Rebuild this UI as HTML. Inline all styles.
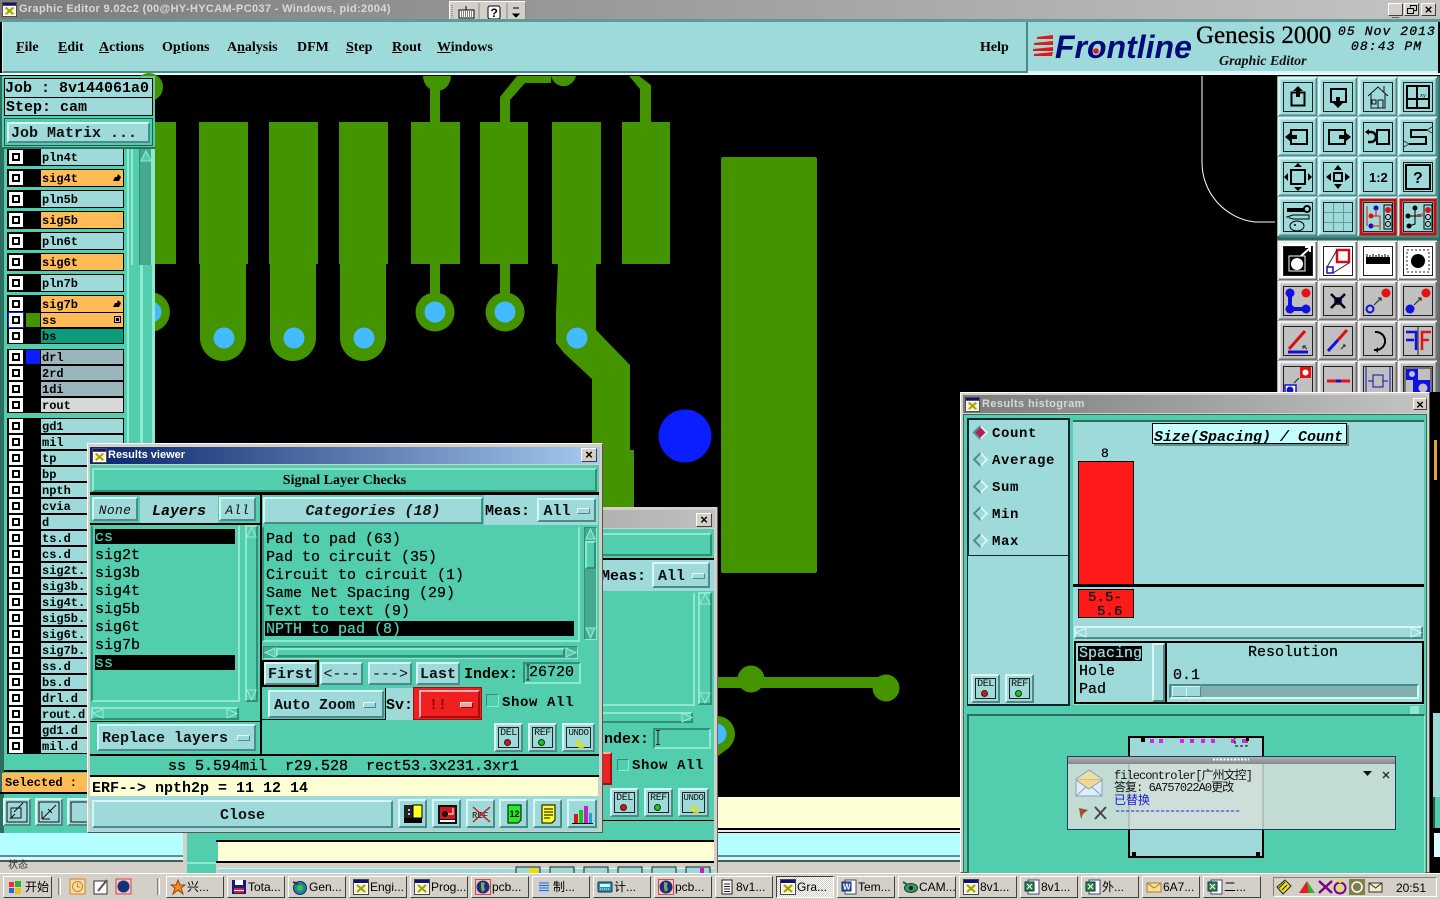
<!DOCTYPE html>
<html><head><meta charset="utf-8"><title>Graphic Editor</title>
<style>
*{box-sizing:border-box;margin:0;padding:0}
html,body{width:1440px;height:900px;overflow:hidden;background:#000}
div{position:absolute}
svg{position:absolute;display:block}
.m,.s,.bn,.ibt{font-family:"Liberation Mono","Noto Sans CJK SC",monospace}
.s{position:absolute;white-space:pre;font-size:15px;line-height:18px;color:#000;font-family:"Liberation Mono",monospace;-webkit-text-stroke:.25px currentColor}
.sb{font-weight:bold;-webkit-text-stroke:0}
.mn{position:absolute;font:bold 14px/18px "Liberation Serif",serif;top:39px;color:#000}
.b{background:#9fdada;border:2px solid;border-color:#d6f6f6 #4d8a8a #4d8a8a #d6f6f6}
.bn{position:absolute;background:#9fdada;border:2px solid;border-color:#d6f6f6 #4d8a8a #4d8a8a #d6f6f6;font-size:15px;font-weight:bold;text-align:center;white-space:pre;color:#111}
.tl{background:#52cdae;border:2px solid;border-color:#8fe8d0 #2f8f78 #2f8f78 #8fe8d0}
.sunk{background:#52cdae;border:2px solid;border-color:#2f8f78 #8fe8d0 #8fe8d0 #2f8f78}
.ln{background:#000}
.r{left:7px;width:117px;height:16px;background:#000}
.r i{position:absolute;left:2px;top:1px;width:14px;height:14px;background:#fff}
.r i:after{content:"";position:absolute;left:3px;top:3px;width:4px;height:4px;border:2px solid #000;background:#fff;box-sizing:content-box}
.r b{position:absolute;left:34px;top:1px;width:82px;height:14px;background:#9fdada;font:bold 12px/17px "Liberation Mono",monospace;color:#000;padding-left:1px;white-space:pre;overflow:hidden}
.r u{position:absolute;left:19px;top:1px;width:14px;height:14px}
.r2{height:18px}
.r2 b{height:16px;line-height:19px}
.r2 i{top:2px}
.r2 u{top:2px}
.o b{background:#ffbb55}
.g b{background:#9ab5bb}
.cl{background:#d4d0c8;border:1px solid;border-color:#fff #404040 #404040 #fff;font:bold 13px/12px "Liberation Sans",sans-serif;text-align:center;color:#000}
.tt{position:absolute;white-space:pre;font:bold 11px/16px "Liberation Sans",sans-serif}
.t{top:876px;height:22px;width:58px;background:#d4d0c8;border:1px solid;border-color:#fff #404040 #404040 #fff;font:12px/21px "Liberation Sans","Noto Sans CJK SC",sans-serif;color:#000;white-space:pre;padding-left:20px}
.t svg{left:3px;top:2px}
.ib{background:#9fdada;border:2px solid;border-color:#d6f6f6 #4d8a8a #4d8a8a #d6f6f6;width:29px;height:29px}
.ib em{position:absolute;left:2px;top:2px;width:21px;height:21px;border:1px solid #222;font:normal 10px/11px "Liberation Mono",monospace;text-align:center;color:#111;letter-spacing:-.4px}
.ib s{position:absolute;left:8px;top:14px;width:7px;height:7px;border-radius:50%;border:1px solid #222;text-decoration:none}
.rad{width:11px;height:11px;transform:rotate(45deg);border:2px solid;border-color:#d6f6f6 #d6f6f6 #4d8a8a #4d8a8a;background:#9fdada}
.hand{left:auto;right:2px;top:4px}
</style></head><body>

<svg width="0" height="0" style="position:absolute"><defs>
<symbol id="xw" viewBox="0 0 16 16"><rect x=".5" y=".5" width="15" height="15" fill="#fff" stroke="#444"/><rect x="1" y="1" width="14" height="3" fill="#11116e"/><rect x="2" y="5" width="12" height="9" fill="#f4f4c8"/><path d="M4 6l8 7M12 6l-8 7" stroke="#a0a000" stroke-width="2"/></symbol>
<symbol id="xl" viewBox="0 0 16 16"><rect x="4" y="1" width="11" height="14" fill="#fff" stroke="#446"/><rect x="1" y="3" width="9" height="9" fill="#2a8a3a" stroke="#135"/><path d="M3 5l5 5M8 5l-5 5" stroke="#fff"/></symbol>
<symbol id="gl" viewBox="0 0 16 16"><rect x=".5" y=".5" width="15" height="15" fill="#e8c8c8" stroke="#d44"/><circle cx="8" cy="8" r="6.5" fill="#16307a"/><path d="M6 3l4 1-1 3 1 4-3 2-1-4z" fill="#8aa060"/></symbol>
</defs></svg>

<!-- top title bar -->
<div style="left:0;top:0;width:1440px;height:20px;background:linear-gradient(90deg,#7c7c7c,#c4c4c4)"></div>
<svg style="left:2px;top:2px" width="15" height="15"><use href="#xw" width="15" height="15"/></svg>
<div class="tt" style="left:19px;top:1px;color:#d8d8d8;letter-spacing:.34px">Graphic Editor 9.02c2 (00@HY-HYCAM-PC037 - Windows, pid:2004)</div>
<div style="left:449px;top:1px;width:77px;height:22px;background:#d4d0c8;border:1px solid;border-color:#fff #888 #888 #fff"></div>
<svg style="left:449px;top:1px" width="77" height="22"><path d="M3 4v14" stroke="#999" stroke-dasharray="1 1" stroke-width="2"/><rect x="10" y="9" width="15" height="8" fill="#fff" stroke="#000"/><path d="M12 11h11M12 13h11M12 15h11" stroke="#000" stroke-dasharray="1 1"/><path d="M17 9V5" stroke="#000"/><path d="M30 2v18M58 2v18" stroke="#888"/><rect x="39" y="5" width="12" height="13" rx="2" fill="#fff" stroke="#000"/><text x="41.500" y="16" font-family="Liberation Sans" font-weight="bold" font-size="12">?</text><path d="M64 7h6M64 13h6l-3 3z" stroke="#000" fill="#000"/></svg>
<div class="cl" style="left:1388px;top:3px;width:15px;height:13px;line-height:15px">_</div>
<div class="cl" style="left:1404px;top:3px;width:15px;height:13px"><svg style="left:2px;top:1px" width="10" height="9"><path d="M3.500 2.500V.5h6v5H7M.5 3.500h6v5h-6z" fill="none" stroke="#000"/></svg></div>
<div class="cl" style="left:1421px;top:3px;width:15px;height:13px">×</div>

<!-- menu bar -->
<div style="left:0;top:19px;width:1440px;height:3px;background:#5f9a9a"></div>
<div style="left:0;top:22px;width:1440px;height:54px;background:#000"></div>
<div style="left:2px;top:22px;width:1024px;height:51px;background:#9fdada;border-left:1px solid #d6f6f6;border-bottom:2px solid #4d8a8a"></div>
<div style="left:1026px;top:22px;width:2px;height:51px;background:#4d8a8a"></div>
<div style="left:0;top:73px;width:1440px;height:2px;background:#e8fafa"></div>
<span class="mn" style="left:16px"><u>F</u>ile</span>
<span class="mn" style="left:58px"><u>E</u>dit</span>
<span class="mn" style="left:99px"><u>A</u>ctions</span>
<span class="mn" style="left:162px">O<u>p</u>tions</span>
<span class="mn" style="left:227px">A<u>n</u>alysis</span>
<span class="mn" style="left:297px">DFM</span>
<span class="mn" style="left:346px"><u>S</u>tep</span>
<span class="mn" style="left:392px"><u>R</u>out</span>
<span class="mn" style="left:437px"><u>W</u>indows</span>
<span class="mn" style="left:980px">Help</span>

<!-- logo panel -->
<div style="left:1028px;top:22px;width:410px;height:51px;background:#9fdada;border-bottom:2px solid #d6f6f6"></div>
<svg style="left:1033px;top:34px" width="22" height="26"><path d="M20 1L4 3v2l16 0zM20 7L1 9v2l19 0zM20 13L0 15v2l20 0zM20 18L1 20v2l18 0z" fill="#e01818"/></svg>
<span class="s" style="left:1055px;top:28px;font:italic bold 32px/38px 'Liberation Sans',sans-serif;color:#000a78;-webkit-text-stroke:0">Frontline</span>
<svg style="left:1091px;top:46px" width="10" height="10"><circle cx="5" cy="5" r="2.800" fill="#e01818"/></svg>
<span class="s" style="left:1196px;top:21px;font:25px/30px 'Liberation Serif',serif;-webkit-text-stroke:.3px #000">Genesis 2000</span>
<span class="s" style="left:1219px;top:53px;font:italic bold 14px/17px 'Liberation Serif',serif;color:#111;-webkit-text-stroke:0">Graphic Editor</span>
<span class="s sb" style="left:1338px;top:23px;font-style:italic;font-size:13px;letter-spacing:1.100px;font-weight:normal;-webkit-text-stroke:.3px #000">05 Nov 2013</span>
<span class="s sb" style="left:1351px;top:38px;font-style:italic;font-size:13px;letter-spacing:1.100px;font-weight:normal;-webkit-text-stroke:.3px #000">08:43 PM</span>

<!-- PCB canvas -->
<svg style="left:0;top:0" width="1440" height="900" viewBox="0 0 1440 900">
<rect x="0" y="76" width="1277" height="760" fill="#000"/>
<g fill="#449400">
<rect x="150" y="122" width="26" height="142"/>
<rect x="199" y="122" width="49" height="142"/><path d="M200 264h46v74a23 23 0 0 1-46 0z"/>
<rect x="269" y="122" width="49" height="142"/><path d="M270 264h46v74a23 23 0 0 1-46 0z"/>
<rect x="339" y="122" width="49" height="142"/><path d="M340 264h46v74a23 23 0 0 1-46 0z"/>
<rect x="411" y="122" width="49" height="142"/>
<rect x="480" y="122" width="48" height="142"/>
<rect x="552" y="122" width="49" height="142"/>
<rect x="622" y="122" width="48" height="142"/>
<rect x="430" y="264" width="10" height="34"/><circle cx="435" cy="312" r="19.500"/>
<rect x="500" y="264" width="10" height="34"/><circle cx="505" cy="312" r="19.500"/>
<circle cx="150" cy="312" r="20"/><circle cx="149" cy="87" r="14"/>
<path d="M558 264h38v66l34 35v85l4 0v60h-42v-131l-28-26-8-10v-30z"/><circle cx="577" cy="338" r="19"/>
<path d="M423 76a14 15 0 0 0 28 0z"/><rect x="430" y="85" width="10" height="37"/>
<path d="M500 122V97l17-21h34v7h-26l-15 17v22z"/><path d="M551 76a13 14 0 0 0 25 0z"/>
<path d="M629 76h10l12 9v37h-11V89z"/>
<rect x="721" y="157" width="96" height="416" rx="2"/>
<rect x="700" y="677" width="186" height="11"/><circle cx="751" cy="679" r="13.500"/><circle cx="886" cy="688" r="13.500"/>
<circle cx="717" cy="734" r="18"/><path d="M700 740l18 16 12-9z" />
</g>
<g fill="#44bbff">
<circle cx="224" cy="338" r="10.500"/><circle cx="294" cy="338" r="10.500"/><circle cx="364" cy="338" r="10.500"/>
<circle cx="435" cy="312" r="10.500"/><circle cx="505" cy="312" r="10.500"/><circle cx="577" cy="338" r="10.500"/>
<circle cx="151" cy="312" r="10.500"/><circle cx="716" cy="734" r="10.500"/>
</g>
<circle cx="685" cy="436" r="26.500" fill="#0a1eff"/>
<path d="M1202 76V163A60 60 0 0 0 1255 222H1275" fill="none" stroke="#fff" stroke-width="1"/>
</svg>

<!-- bottom band -->
<div style="left:716px;top:797px;width:244px;height:31px;background:#ffffd6"></div>
<div style="left:0;top:828px;width:960px;height:5px;background:#000"></div>
<div style="left:0;top:830px;width:960px;height:2px;background:#eee"></div>
<div style="left:0;top:833px;width:960px;height:22px;background:#b4ffff"></div>
<div style="left:0;top:855px;width:960px;height:2px;background:#6a8a8a"></div>
<div style="left:0;top:857px;width:960px;height:3px;background:#c8ffff"></div>
<div style="left:0;top:860px;width:960px;height:2px;background:#555"></div>
<div style="left:0;top:862px;width:960px;height:11px;background:#d4d0c8"></div>
<span class="s" style="left:8px;top:858px;font:10px/12px 'Noto Sans CJK SC',sans-serif;color:#333;-webkit-text-stroke:0">状态</span>

<!-- left panel -->
<div style="left:0;top:76px;width:155px;height:757px;background:#52cdae;border-left:4px solid #2e6e5e"></div>
<div style="left:127px;top:148px;width:2px;height:685px;background:#8fe8d0"></div>
<div style="left:131px;top:148px;width:2px;height:117px;background:#8fe8d0"></div>
<div style="left:139px;top:148px;width:13px;height:117px;background:#46a88f;border-left:1px solid #2f8f78;border-right:1px solid #8fe8d0"></div>
<div style="left:140px;top:265px;width:3px;height:568px;background:#8fe8d0"></div>
<div style="left:152px;top:148px;width:3px;height:685px;background:#8fe8d0"></div>
<svg style="left:140px;top:150px" width="12" height="12"><polygon points="6,1 11,11 1,11" fill="#52cdae" stroke="#9fe8d8"/></svg>

<div class="r r2" style="top:148px"><i></i><u></u><b>pln4t</b></div>
<div class="r r2 o" style="top:169px"><i></i><u></u><b>sig4t<svg class="hand" width="8" height="8"><path d="M0 7l2-4 2 0 1-3 1 1 2 2-2 4z"/></svg></b></div>
<div class="r r2" style="top:190px"><i></i><u></u><b>pln5b</b></div>
<div class="r r2 o" style="top:211px"><i></i><u></u><b>sig5b</b></div>
<div class="r r2" style="top:232px"><i></i><u></u><b>pln6t</b></div>
<div class="r r2 o" style="top:253px"><i></i><u></u><b>sig6t</b></div>
<div class="r r2" style="top:274px"><i></i><u></u><b>pln7b</b></div>
<div class="r r2 o" style="top:295px"><i></i><u></u><b>sig7b<svg class="hand" width="8" height="8"><path d="M0 7l2-4 2 0 1-3 1 1 2 2-2 4z"/></svg></b></div>
<div class="r o" style="top:312px"><i style="box-shadow:0 0 0 1px #0a1eff"></i><u style="background:#449400"></u><b>ss<svg class="hand" style="top:3px" width="7" height="7"><rect x=".5" y=".5" width="6" height="6" fill="none" stroke="#000"/><rect x="2" y="2" width="3" height="3"/></svg></b></div>
<div class="r" style="top:328px"><i></i><u></u><b style="background:#0c9c7c">bs</b></div>
<div class="r g" style="top:349px"><i></i><u style="background:#0a1eff"></u><b>drl</b></div>
<div class="r g" style="top:365px"><i></i><u></u><b>2rd</b></div>
<div class="r g" style="top:381px"><i></i><u></u><b>1di</b></div>
<div class="r" style="top:397px"><i></i><u></u><b style="background:#d8d8d8">rout</b></div>
<div class="r" style="top:418px"><i></i><u></u><b>gd1</b></div>
<div class="r" style="top:434px"><i></i><u></u><b>mil</b></div>
<div class="r" style="top:450px"><i></i><u></u><b>tp</b></div>
<div class="r" style="top:466px"><i></i><u></u><b>bp</b></div>
<div class="r" style="top:482px"><i></i><u></u><b>npth</b></div>
<div class="r" style="top:498px"><i></i><u></u><b>cvia</b></div>
<div class="r" style="top:514px"><i></i><u></u><b>d</b></div>
<div class="r" style="top:530px"><i></i><u></u><b>ts.d</b></div>
<div class="r" style="top:546px"><i></i><u></u><b>cs.d</b></div>
<div class="r" style="top:562px"><i></i><u></u><b>sig2t.</b></div>
<div class="r" style="top:578px"><i></i><u></u><b>sig3b.</b></div>
<div class="r" style="top:594px"><i></i><u></u><b>sig4t.</b></div>
<div class="r" style="top:610px"><i></i><u></u><b>sig5b.</b></div>
<div class="r" style="top:626px"><i></i><u></u><b>sig6t.</b></div>
<div class="r" style="top:642px"><i></i><u></u><b>sig7b.</b></div>
<div class="r" style="top:658px"><i></i><u></u><b>ss.d</b></div>
<div class="r" style="top:674px"><i></i><u></u><b>bs.d</b></div>
<div class="r" style="top:690px"><i></i><u></u><b>drl.d</b></div>
<div class="r" style="top:706px"><i></i><u></u><b>rout.d</b></div>
<div class="r" style="top:722px"><i></i><u></u><b>gd1.d</b></div>
<div class="r" style="top:738px"><i></i><u></u><b>mil.d</b></div>

<!-- job box -->
<div style="left:2px;top:76px;width:153px;height:73px;background:#52cdae;border-bottom:2px solid #2e6e5e"></div>
<div style="left:4px;top:78px;width:149px;height:20px;background:#9fdada;border:1px solid #000"></div>
<span class="s sb" style="left:5px;top:80px">Job : 8v144061a0</span>
<div style="left:4px;top:97px;width:149px;height:19px;background:#9fdada;border:1px solid #000"></div>
<span class="s sb" style="left:6px;top:99px">Step: cam</span>
<div style="left:4px;top:118px;width:149px;height:28px;background:#52cdae;border:1px solid #1e5e4e"></div>
<div class="bn" style="left:7px;top:122px;width:143px;height:21px;text-align:left;padding-left:2px;line-height:20px">Job Matrix ...</div>

<!-- selected -->
<div style="left:0;top:756px;width:88px;height:77px;background:#52cdae;border-left:4px solid #2e6e5e"></div>
<div style="left:4px;top:770px;width:84px;height:2px;background:#000"></div>
<div style="left:2px;top:773px;width:86px;height:19px;background:#ffbb55"></div>
<span class="s sb" style="left:5px;top:774px;font-size:12px">Selected :</span>
<div style="left:0;top:792px;width:88px;height:2px;background:#000"></div>
<div class="bn" style="left:3px;top:798px;width:28px;height:28px"><svg width="24" height="24"><rect x="2" y="2" width="20" height="20" fill="none" stroke="#111"/><rect x="6" y="8" width="10" height="10" fill="none" stroke="#111"/><path d="M9 12l9-9M5 19l5-5" stroke="#111"/></svg></div>
<div class="bn" style="left:35px;top:798px;width:28px;height:28px"><svg width="24" height="24"><rect x="2" y="2" width="20" height="20" fill="none" stroke="#111"/><path d="M5 19L19 5M5 19h8M5 19v-8M11 9l4 4" stroke="#111"/></svg></div>
<div class="bn" style="left:67px;top:798px;width:28px;height:28px"><svg width="24" height="24"><rect x="2" y="2" width="20" height="20" fill="none" stroke="#111"/></svg></div>
<div style="left:88px;top:796px;width:2px;height:37px;background:#000"></div>

<!-- right toolbar -->
<svg style="left:1277px;top:76px" width="163" height="316" viewBox="1277 76 163 316">
<defs>
<g id="btT"><rect width="38" height="38" fill="#9fdada"/><path d="M0 38V0H38" fill="none" stroke="#d6f6f6" stroke-width="3"/><path d="M0 38H38V0" fill="none" stroke="#4d8a8a" stroke-width="3"/><rect x="4.500" y="4.500" width="29" height="29" fill="none" stroke="#222"/></g>
<g id="btG"><rect width="38" height="38" fill="#c0c0c0"/><path d="M0 38V0H38" fill="none" stroke="#efefef" stroke-width="3"/><path d="M0 38H38V0" fill="none" stroke="#707070" stroke-width="3"/><rect x="4.500" y="4.500" width="29" height="29" fill="none" stroke="#222"/></g>
<g id="btW"><rect width="38" height="38" fill="#fff"/><path d="M0 38V0H38" fill="none" stroke="#efefef" stroke-width="3"/><path d="M0 38H38V0" fill="none" stroke="#707070" stroke-width="3"/><rect x="4.500" y="4.500" width="29" height="29" fill="none" stroke="#222"/></g>
</defs>
<rect x="1277" y="76" width="163" height="161" fill="#2e6e5e"/>
<rect x="1277" y="237" width="163" height="4" fill="#2e6e5e"/>
<rect x="1277" y="241" width="163" height="151" fill="#5a6a6a"/>
<!-- row1 -->
<g transform="translate(1279 78)"><use href="#btT"/><path d="M12.500 14.500h13v13h-13z" fill="none" stroke="#000" stroke-width="2"/><path d="M19 8l-5 5h3v6h4v-6h3z" fill="#000"/></g>
<g transform="translate(1319 78)"><use href="#btT"/><path d="M12 11h15v13H12z" fill="none" stroke="#000" stroke-width="2"/><path d="M19 30l-5-5h3v-6h4v6h3z" fill="#000"/></g>
<g transform="translate(1359 78)"><use href="#btT"/><path d="M9 18l10-9 10 9M12 16v14h14V16M19 30v-8h5v8M13 22h4v4h-4zM25 8v7" fill="none" stroke="#111"/></g>
<g transform="translate(1399 78)"><use href="#btT"/><rect x="8" y="8" width="22" height="22" fill="none" stroke="#000" stroke-width="2"/><path d="M18 8v22M8 21h22" stroke="#000" stroke-width="2"/><text x="21" y="19" font-size="5" font-family="Liberation Mono">xy</text></g>
<!-- row2 -->
<g transform="translate(1279 118)"><use href="#btT"/><rect x="12" y="12" width="16" height="14" fill="none" stroke="#000" stroke-width="2"/><path d="M6 19l6-5v3h6v4h-6v3z" fill="#000"/></g>
<g transform="translate(1319 118)"><use href="#btT"/><rect x="10" y="12" width="16" height="14" fill="none" stroke="#000" stroke-width="2"/><path d="M32 19l-6-5v3h-6v4h6v3z" fill="#000"/></g>
<g transform="translate(1359 118)"><use href="#btT"/><rect x="18" y="12" width="12" height="14" fill="none" stroke="#000" stroke-width="2"/><path d="M8 14h4a4 4 0 0 1 0 10H9" fill="none" stroke="#000" stroke-width="2.500"/><path d="M6 14l4-3v6z" fill="#000"/></g>
<g transform="translate(1399 118)"><use href="#btT"/><path d="M28 12H12v7h15v7H10" fill="none" stroke="#000" stroke-width="2"/><path d="M28 12l5-3M28 12l5 3M10 26l-5-3M10 26l-5 3" stroke="#333" fill="none"/></g>
<!-- row3 -->
<g transform="translate(1279 158)"><use href="#btT"/><rect x="12" y="12" width="14" height="14" fill="none" stroke="#000" stroke-width="2"/><path d="M19 5l-4 4h8zM19 33l-4-4h8zM5 19l4-4v8zM33 19l-4-4v8z" fill="#000"/></g>
<g transform="translate(1319 158)"><use href="#btT"/><rect x="15" y="15" width="8" height="8" fill="none" stroke="#000" stroke-width="2"/><path d="M19 7l-4 5h8zM19 31l-4-5h8zM7 19l5-4v8zM31 19l-5-4v8z" fill="#000"/></g>
<g transform="translate(1359 158)"><use href="#btT"/><text x="10" y="24" font-family="Liberation Sans" font-weight="bold" font-size="13">1:2</text></g>
<g transform="translate(1399 158)"><use href="#btT"/><rect x="7" y="7" width="24" height="24" fill="none" stroke="#000" stroke-width="2"/><text x="14" y="25" font-family="Liberation Sans" font-weight="bold" font-size="16">?</text></g>
<!-- row4 -->
<g transform="translate(1279 198)"><use href="#btT"/><path d="M8 11h18M8 13h18" stroke="#000" stroke-width="2"/><circle cx="28" cy="11" r="3" fill="none" stroke="#000" stroke-width="2"/><path d="M8 19l6-2h16v4H14z" fill="none" stroke="#000"/><ellipse cx="18" cy="28" rx="7" ry="5" fill="none" stroke="#000"/><circle cx="16" cy="27" r="1" fill="#000"/></g>
<g transform="translate(1319 198)"><use href="#btT"/><path d="M14.500 5v28M24.500 5v28M5 14.500h28M5 24.500h28" stroke="#6a9a9a"/></g>
<g transform="translate(1359 198)"><use href="#btT"/><rect x="2" y="2" width="34" height="34" fill="none" stroke="#c01010" stroke-width="3"/><rect x="25" y="7" width="8" height="24" fill="none" stroke="#000"/><circle cx="29" cy="12" r="3" fill="#e01010"/><circle cx="29" cy="19" r="2.500" fill="none" stroke="#000"/><circle cx="29" cy="26" r="2.500" fill="none" stroke="#000"/><circle cx="12" cy="18" r="2.500" fill="#e01010"/><circle cx="17" cy="10" r="2.500" fill="#10c"/><circle cx="12" cy="28" r="2.500" fill="#10c"/><path d="M12 18h9v14M17 10v8M12 28h8M8 8v20" stroke="#e01010" fill="none"/></g>
<g transform="translate(1399 198)"><use href="#btT"/><rect x="2" y="2" width="34" height="34" fill="none" stroke="#c01010" stroke-width="3"/><rect x="25" y="7" width="8" height="24" fill="none" stroke="#000"/><circle cx="29" cy="12" r="3" fill="#e01010"/><circle cx="29" cy="19" r="2.500" fill="none" stroke="#000"/><circle cx="29" cy="26" r="2.500" fill="none" stroke="#000"/><circle cx="9" cy="18" r="2.500" fill="#000"/><circle cx="16" cy="10" r="2.500" fill="#000"/><circle cx="10" cy="28" r="2.500" fill="#000"/><path d="M16 10v16l-6 2M11 18h10M19 16v3M21 16v3" stroke="#000" fill="none"/><path d="M18 18h5v-3" stroke="#e01010" fill="none"/></g>
<!-- section 2 row1 -->
<g transform="translate(1279 242)"><use href="#btW"/><rect x="5" y="5" width="28" height="28" fill="#000"/><rect x="10" y="14" width="16" height="15" fill="none" stroke="#fff"/><circle cx="18" cy="22" r="6" fill="#fff"/><path d="M22 14l9-8M26 5h5v5" stroke="#fff" fill="none" stroke-width="2"/></g>
<g transform="translate(1319 242)"><use href="#btW"/><rect x="18" y="8" width="12" height="12" fill="#fff" stroke="#d01010" stroke-width="2.500"/><rect x="8" y="25" width="6" height="6" fill="#fff" stroke="#1010d0" stroke-width="1.500"/><path d="M8 25L18 8M14 31l16-10" stroke="#222"/></g>
<g transform="translate(1359 242)"><use href="#btW"/><rect x="7" y="15" width="24" height="7" fill="#000"/><path d="M8 15v-3M11 15v-2M14 15v-3M17 15v-2M20 15v-3M23 15v-2M26 15v-3M29 15v-2" stroke="#000"/></g>
<g transform="translate(1399 242)"><use href="#btW"/><rect x="8" y="8" width="22" height="22" fill="none" stroke="#222" stroke-dasharray="2 2"/><circle cx="19" cy="19" r="7" fill="#000"/></g>
<!-- row2 -->
<g transform="translate(1279 282)"><use href="#btG"/><path d="M11 11v16h16" fill="none" stroke="#1010e0" stroke-width="4"/><circle cx="11" cy="11" r="4.500" fill="#1010e0"/><circle cx="11" cy="27" r="4.500" fill="#1010e0"/><circle cx="27" cy="27" r="4.500" fill="#1010e0"/><circle cx="27" cy="11" r="4.500" fill="#e81010"/></g>
<g transform="translate(1319 282)"><use href="#btG"/><circle cx="19" cy="19" r="4" fill="#1010a0"/><path d="M12 12l14 14M26 12L12 26" stroke="#000" stroke-width="2.500"/></g>
<g transform="translate(1359 282)"><use href="#btG"/><circle cx="27" cy="11" r="4.500" fill="#e81010"/><circle cx="11" cy="27" r="3.500" fill="none" stroke="#1010e0" stroke-width="2"/><path d="M15 23l7-7M19 16h3v3" stroke="#222" fill="none"/></g>
<g transform="translate(1399 282)"><use href="#btG"/><circle cx="27" cy="11" r="4.500" fill="#e81010"/><circle cx="11" cy="27" r="4.500" fill="#1010e0"/><path d="M15 23l7-7M19 16h3v3" stroke="#222" fill="none"/></g>
<!-- row3 -->
<g transform="translate(1279 322)"><use href="#btG"/><path d="M10 27L26 9" stroke="#d81010" stroke-width="3"/><path d="M9 30h20" stroke="#1010e0" stroke-width="3"/><path d="M24 24l4 3M24 24v3M24 24h3" stroke="#222" fill="none"/></g>
<g transform="translate(1319 322)"><use href="#btG"/><path d="M9 29L19 18" stroke="#1010e0" stroke-width="3"/><path d="M19 18L28 8" stroke="#d81010" stroke-width="3"/><path d="M22 27l4-4M24 23h2v2" stroke="#222" fill="none"/></g>
<g transform="translate(1359 322)"><use href="#btG"/><path d="M16 10a8 8 0 0 1 2 18h-3" fill="none" stroke="#000" stroke-width="2"/><path d="M16 28l3-3v6z" fill="#000"/></g>
<g transform="translate(1399 322)"><use href="#btG"/><path d="M7 10h10v18M7 18h8" fill="none" stroke="#1010e0" stroke-width="2.500"/><path d="M19 5v28" stroke="#222"/><path d="M32 10H23v18M23 18h7" fill="none" stroke="#e81010" stroke-width="2.500"/></g>
<!-- row4 -->
<g transform="translate(1279 362)"><use href="#btG"/><rect x="21" y="5" width="11" height="11" fill="#e81010"/><circle cx="26.500" cy="10.500" r="3" fill="#fff"/><rect x="6" y="23" width="11" height="11" fill="#fff" stroke="#1010e0" stroke-width="1.500"/><circle cx="11" cy="28" r="3.500" fill="#1010e0"/><path d="M15 21l5-5" stroke="#222"/></g>
<g transform="translate(1319 362)"><use href="#btG"/><path d="M8 19h9" stroke="#e81010" stroke-width="3"/><path d="M17 19h5" stroke="#1010e0" stroke-width="3"/><path d="M22 19h9" stroke="#e81010" stroke-width="3"/></g>
<g transform="translate(1359 362)"><use href="#btG"/><path d="M7 5v28M31 5v28M9 19h20" stroke="#1010a0" fill="none"/><rect x="14" y="13" width="10" height="12" fill="#c0c0c0" stroke="#1010a0"/></g>
<g transform="translate(1399 362)"><use href="#btG"/><rect x="6" y="6" width="26" height="26" fill="#c0c0c0" stroke="#222"/><path d="M7 7h12v11h12v14H14V18H7z" fill="#1010e0"/><circle cx="13" cy="12" r="3" fill="#c0c0c0"/><circle cx="24" cy="26" r="4.500" fill="#c0c0c0"/></g>
</svg>

<!-- second window -->
<div style="left:183px;top:507px;width:535px;height:366px;background:#d4d0c8;border-right:1px solid #666"></div>
<div style="left:187px;top:510px;width:528px;height:18px;background:linear-gradient(90deg,#7c7c7c,#c0c0c0)"></div>
<div class="cl" style="left:696px;top:513px;width:16px;height:14px">×</div>
<div style="left:187px;top:529px;width:527px;height:334px;background:#52cdae"></div>
<div style="left:187px;top:863px;width:29px;height:10px;background:#52cdae"></div>
<div class="tl" style="left:190px;top:533px;width:522px;height:23px"></div>
<div class="ln" style="left:187px;top:558px;width:527px;height:2px"></div>
<div style="left:187px;top:560px;width:527px;height:31px;background:#9fdada"></div>
<span class="s sb" style="left:601px;top:568px">Meas:</span>
<div class="bn" style="left:652px;top:562px;width:58px;height:26px;line-height:25px;padding-right:19px">All</div>
<div style="left:692px;top:573px;width:13px;height:6px;background:#9fdada;border:1px solid;border-color:#e8fafa #4d8a8a #4d8a8a #e8fafa"></div>
<div class="sunk" style="left:200px;top:592px;width:495px;height:114px;border-color:#52cdae #8fe8d0 #8fe8d0 #2f8f78"></div>
<div class="tl" style="left:698px;top:592px;width:14px;height:113px"></div>
<svg style="left:699px;top:593px" width="12" height="12"><polygon points="6,1 11,11 1,11" fill="#52cdae" stroke="#9fe8d8"/></svg>
<svg style="left:699px;top:692px" width="12" height="12"><polygon points="6,11 11,1 1,1" fill="#52cdae" stroke="#9fe8d8"/></svg>
<div class="tl" style="left:200px;top:712px;width:493px;height:11px"></div>
<svg style="left:681px;top:712px" width="12" height="11"><polygon points="11,5.500 1,1 1,10" fill="#52cdae" stroke="#9fe8d8"/></svg>
<span class="s sb" style="left:595px;top:731px">Index:</span>
<div class="sunk" style="left:653px;top:728px;width:58px;height:21px"></div>
<svg style="left:655px;top:730px" width="6" height="16"><path d="M1 .5h4M3 .5v14M1 14.500h4" stroke="#222" fill="none"/></svg>
<div style="left:590px;top:752px;width:22px;height:33px;background:#f02020;border:2px solid;border-color:#ffb0b0 #a01010 #a01010 #ffb0b0"></div>
<div class="sunk" style="left:617px;top:759px;width:12px;height:12px;border-width:1px"></div>
<span class="s sb" style="left:632px;top:757px;font-size:14px;letter-spacing:.6px">Show All</span>
<div class="ib" style="left:610px;top:788px"><em>DEL</em><s style="background:#e01010"></s></div>
<div class="ib" style="left:644px;top:788px"><em>REF</em><s style="background:#10d010"></s></div>
<div class="ib" style="left:678px;top:788px;width:31px"><em style="width:23px;font-size:9px">UNDO</em><svg style="left:9px;top:13px" width="11" height="11"><path d="M2 5h5a2.500 2.500 0 0 1 0 5H4M2 5l3-3M2 5l3 3" fill="none" stroke="#e8e000" stroke-width="1.600"/></svg></div>
<div class="ln" style="left:187px;top:820px;width:527px;height:1px"></div>
<div class="ln" style="left:216px;top:840px;width:498px;height:2px"></div>
<div style="left:218px;top:842px;width:496px;height:19px;background:#ffffd6"></div>
<div class="ln" style="left:216px;top:861px;width:498px;height:2px"></div>
<div style="left:218px;top:868px;width:496px;height:5px;background:#9fdada;border-top:1px solid #d6f6f6"></div>
<svg style="left:515px;top:866px" width="198" height="8"><g fill="#9fdada" stroke="#222"><rect x="1" y="1" width="24" height="9"/><rect x="35" y="1" width="24" height="9"/><rect x="69" y="1" width="24" height="9"/><rect x="103" y="1" width="24" height="9"/><rect x="137" y="1" width="24" height="9"/><rect x="171" y="1" width="24" height="9"/></g><rect x="14" y="2" width="9" height="6" fill="#e8e000"/><rect x="185" y="2" width="4" height="6" fill="#c020c0"/></svg>
<div style="left:186px;top:862px;width:30px;height:2px;background:#8fe8d0"></div>

<!-- histogram window -->
<div style="left:1430px;top:392px;width:10px;height:481px;background:#000"></div>
<div style="left:1434px;top:440px;width:3px;height:40px;background:#e0a040"></div>
<div style="left:1433px;top:713px;width:7px;height:84px;background:#9fdada"></div>
<div style="left:1433px;top:797px;width:7px;height:31px;background:#52cdae;border-left:2px solid #1e5e4e"></div>
<div style="left:1433px;top:833px;width:7px;height:24px;background:#d8ffff;border-left:1px solid #000"></div>
<div style="left:960px;top:392px;width:470px;height:481px;background:#d4d0c8;border:1px solid;border-color:#fff #555 #555 #fff"></div>
<div style="left:963px;top:395px;width:464px;height:18px;background:linear-gradient(90deg,#7c7c7c,#c4c4c4)"></div>
<svg style="left:965px;top:397px" width="15" height="15"><use href="#xw" width="15" height="15"/></svg>
<div class="tt" style="left:982px;top:396px;color:#d8d8d8;letter-spacing:.4px">Results histogram</div>
<div class="cl" style="left:1413px;top:398px;width:14px;height:12px;line-height:11px">×</div>
<div style="left:963px;top:414px;width:464px;height:459px;background:#52cdae;border:1px solid #2e6e5e"></div>
<div style="left:967px;top:418px;width:103px;height:288px;background:#9fdada;border:1px solid #123;border-width:2px 2px 2px 1px"></div>
<div style="left:967px;top:418px;width:103px;height:138px;border:1px solid #123;border-width:2px 2px 1px 2px"></div>
<div class="rad" style="left:975px;top:427px;background:#c01850"></div>
<div class="rad" style="left:975px;top:454px"></div>
<div class="rad" style="left:975px;top:481px"></div>
<div class="rad" style="left:975px;top:508px"></div>
<div class="rad" style="left:975px;top:535px"></div>
<span class="s sb" style="left:992px;top:425px;font-size:14px;letter-spacing:.6px">Count</span>
<span class="s sb" style="left:992px;top:452px;font-size:14px;letter-spacing:.6px">Average</span>
<span class="s sb" style="left:992px;top:479px;font-size:14px;letter-spacing:.6px">Sum</span>
<span class="s sb" style="left:992px;top:506px;font-size:14px;letter-spacing:.6px">Min</span>
<span class="s sb" style="left:992px;top:533px;font-size:14px;letter-spacing:.6px">Max</span>
<div class="ib" style="left:971px;top:674px"><em>DEL</em><s style="background:#e01010"></s></div>
<div class="ib" style="left:1005px;top:674px"><em>REF</em><s style="background:#10d010"></s></div>
<div style="left:1073px;top:420px;width:351px;height:285px;background:#9fdada;border-top:2px solid #2e6e5e"></div>
<div style="left:1152px;top:423px;width:195px;height:21px;background:#c4ffff;border:1px solid #000;box-shadow:2px 2px 0 #5f8f8f"></div>
<span class="s" style="left:1154px;top:429px;font-style:italic;font-size:15px;font-weight:bold;-webkit-text-stroke:0">Size(Spacing) / Count</span>
<span class="s" style="left:1101px;top:445px;font-size:13px">8</span>
<div style="left:1078px;top:461px;width:56px;height:124px;background:#ff1a1a;border:1px solid #000"></div>
<div class="ln" style="left:1073px;top:584px;width:351px;height:3px"></div>
<div style="left:1078px;top:589px;width:56px;height:29px;background:#ff1a1a;border:1px solid #000"></div>
<span class="s" style="left:1088px;top:591px;font-size:14px;letter-spacing:.1px;line-height:15px">5.5-</span>
<span class="s" style="left:1097px;top:606px;font-size:14px;letter-spacing:.1px;line-height:13px;height:12px;overflow:hidden">5.6</span>
<div class="b" style="left:1074px;top:626px;width:349px;height:13px"></div>
<svg style="left:1075px;top:627px" width="12" height="11"><polygon points="1,5.500 11,1 11,10" fill="#9fdada" stroke="#d6f6f6"/></svg>
<svg style="left:1410px;top:627px" width="12" height="11"><polygon points="11,5.500 1,1 1,10" fill="#9fdada" stroke="#d6f6f6"/></svg>
<div style="left:1074px;top:641px;width:350px;height:63px;background:#000"></div>
<div style="left:1076px;top:643px;width:76px;height:59px;background:#9fdada"></div>
<div style="left:1078px;top:646px;width:64px;height:15px;background:#000"></div>
<span class="s" style="left:1079px;top:645px;color:#9fdada">Spacing</span>
<span class="s" style="left:1079px;top:663px">Hole</span>
<span class="s" style="left:1079px;top:681px">Pad</span>
<div class="b" style="left:1152px;top:643px;width:13px;height:59px"></div>
<div style="left:1167px;top:643px;width:255px;height:59px;background:#9fdada"></div>
<span class="s" style="left:1248px;top:644px">Resolution</span>
<span class="s" style="left:1173px;top:667px">0.1</span>
<div style="left:1169px;top:684px;width:250px;height:15px;background:#82b0b0;border:2px solid;border-color:#4d8a8a #d6f6f6 #d6f6f6 #4d8a8a"></div>
<div class="b" style="left:1172px;top:686px;width:15px;height:11px;border-width:1px"></div>
<div class="b" style="left:1186px;top:686px;width:15px;height:11px;border-width:1px"></div>
<div style="left:1410px;top:706px;width:9px;height:9px;background:#8fe8d0"></div>
<div style="left:967px;top:714px;width:458px;height:159px;background:#52cdae;border:2px solid #2e6e5e;border-bottom:0;border-right:1px solid #8fe8d0"></div>
<div style="left:1128px;top:736px;width:136px;height:122px;background:#9fdada;border:2px solid #000"></div>
<svg style="left:1128px;top:736px" width="136" height="122"><g fill="#e020e0"><rect x="22" y="3" width="4" height="4"/><rect x="31" y="3" width="4" height="4"/><rect x="52" y="3" width="4" height="4"/><rect x="62" y="3" width="4" height="4"/><rect x="73" y="3" width="4" height="4"/><rect x="83" y="3" width="4" height="4"/><rect x="103" y="3" width="4" height="4"/><rect x="114" y="3" width="4" height="4"/></g><rect x="107" y="1" width="12" height="9" fill="none" stroke="#000" stroke-dasharray="3 2"/><rect x="13" y="2" width="4" height="4"/><rect x="4" y="116" width="4" height="5"/><rect x="128" y="116" width="4" height="5"/><rect x="118" y="2" width="3" height="3"/></svg>

<!-- results viewer -->
<div style="left:87px;top:443px;width:516px;height:390px;background:#d4d0c8;border:1px solid;border-color:#fff #555 #555 #fff"></div>
<div style="left:90px;top:447px;width:510px;height:17px;background:linear-gradient(90deg,#0a246a,#a6caf0)"></div>
<svg style="left:92px;top:448px" width="15" height="15"><use href="#xw" width="15" height="15"/></svg>
<div class="tt" style="left:108px;top:447px;color:#fff">Results viewer</div>
<div class="cl" style="left:581px;top:448px;width:16px;height:14px">×</div>
<div style="left:90px;top:465px;width:509px;height:290px;background:#52cdae"></div>
<div class="tl" style="left:92px;top:468px;width:505px;height:24px;text-align:center;font:bold 14px/21px 'Liberation Serif',serif;color:#000">Signal Layer Checks</div>
<div class="ln" style="left:90px;top:492px;width:509px;height:3px"></div>
<div style="left:90px;top:495px;width:170px;height:260px;background:#52cdae"></div>
<div class="ln" style="left:260px;top:495px;width:2px;height:261px"></div>
<div class="bn" style="left:92px;top:497px;width:46px;height:24px;font-weight:normal;font-style:italic;font-size:13px;line-height:24px;letter-spacing:.3px">None</div>
<div style="left:140px;top:496px;width:78px;height:27px;background:#9fdada"></div>
<span class="s sb" style="left:152px;top:503px;font-style:italic">Layers</span>
<div class="bn" style="left:219px;top:497px;width:37px;height:24px;font-weight:normal;font-style:italic;font-size:13px;line-height:24px;letter-spacing:.3px">All</div>
<div class="ln" style="left:90px;top:523px;width:170px;height:2px"></div>
<div class="sunk" style="left:91px;top:525px;width:149px;height:177px;border-color:#52cdae #8fe8d0 #8fe8d0 #2f8f78"></div>
<div class="ln" style="left:95px;top:529px;width:140px;height:15px"></div>
<div class="ln" style="left:95px;top:655px;width:140px;height:15px"></div>
<span class="s" style="left:95px;top:529px;color:#52cdae">cs</span>
<span class="s" style="left:95px;top:547px">sig2t</span>
<span class="s" style="left:95px;top:565px">sig3b</span>
<span class="s" style="left:95px;top:583px">sig4t</span>
<span class="s" style="left:95px;top:601px">sig5b</span>
<span class="s" style="left:95px;top:619px">sig6t</span>
<span class="s" style="left:95px;top:637px">sig7b</span>
<span class="s" style="left:95px;top:655px;color:#52cdae">ss</span>
<div class="tl" style="left:245px;top:525px;width:13px;height:177px"></div>
<svg style="left:246px;top:526px" width="11" height="12"><polygon points="5.500,1 10,11 1,11" fill="#52cdae" stroke="#9fe8d8"/></svg>
<svg style="left:246px;top:689px" width="11" height="12"><polygon points="5.500,11 10,1 1,1" fill="#52cdae" stroke="#9fe8d8"/></svg>
<div class="tl" style="left:91px;top:707px;width:148px;height:13px"></div>
<svg style="left:92px;top:708px" width="12" height="11"><polygon points="1,5.500 11,1 11,10" fill="#52cdae" stroke="#9fe8d8"/></svg>
<svg style="left:226px;top:708px" width="12" height="11"><polygon points="11,5.500 1,1 1,10" fill="#52cdae" stroke="#9fe8d8"/></svg>
<div class="ln" style="left:90px;top:721px;width:170px;height:1px"></div>
<div class="bn" style="left:97px;top:724px;width:159px;height:27px;text-align:left;padding-left:3px;line-height:25px">Replace layers</div>
<div style="left:237px;top:735px;width:13px;height:6px;background:#9fdada;border:1px solid;border-color:#e8fafa #4d8a8a #4d8a8a #e8fafa"></div>

<div style="left:262px;top:495px;width:337px;height:260px;background:#52cdae"></div>
<div class="bn" style="left:263px;top:497px;width:220px;height:27px;font-style:italic;line-height:26px">Categories (18)</div>
<div style="left:484px;top:495px;width:114px;height:30px;background:#9fdada"></div>
<span class="s sb" style="left:485px;top:503px">Meas:</span>
<div class="bn" style="left:537px;top:498px;width:59px;height:24px;line-height:24px;padding-right:19px">All</div>
<div style="left:577px;top:508px;width:13px;height:6px;background:#9fdada;border:1px solid;border-color:#e8fafa #4d8a8a #4d8a8a #e8fafa"></div>
<div class="sunk" style="left:262px;top:526px;width:318px;height:116px;border-color:#52cdae #8fe8d0 #8fe8d0 #2f8f78"></div>
<div class="ln" style="left:265px;top:621px;width:309px;height:15px"></div>
<span class="s" style="left:266px;top:531px">Pad to pad (63)</span>
<span class="s" style="left:266px;top:549px">Pad to circuit (35)</span>
<span class="s" style="left:266px;top:567px">Circuit to circuit (1)</span>
<span class="s" style="left:266px;top:585px">Same Net Spacing (29)</span>
<span class="s" style="left:266px;top:603px">Text to text (9)</span>
<span class="s" style="left:266px;top:621px;color:#52cdae">NPTH to pad (8)</span>
<div style="left:584px;top:527px;width:13px;height:113px;background:#46a88f;border:1px solid;border-color:#2f8f78 #8fe8d0 #8fe8d0 #2f8f78"></div>
<div class="tl" style="left:585px;top:541px;width:11px;height:28px"></div>
<svg style="left:585px;top:528px" width="11" height="12"><polygon points="5.500,1 10,11 1,11" fill="#52cdae" stroke="#9fe8d8"/></svg>
<svg style="left:585px;top:627px" width="11" height="12"><polygon points="5.500,11 10,1 1,1" fill="#52cdae" stroke="#9fe8d8"/></svg>
<div style="left:263px;top:646px;width:315px;height:13px;background:#46a88f;border:1px solid;border-color:#2f8f78 #8fe8d0 #8fe8d0 #2f8f78"></div>
<div class="tl" style="left:276px;top:648px;width:289px;height:9px"></div>
<svg style="left:264px;top:647px" width="12" height="11"><polygon points="1,5.500 11,1 11,10" fill="#52cdae" stroke="#9fe8d8"/></svg>
<svg style="left:565px;top:647px" width="12" height="11"><polygon points="11,5.500 1,1 1,10" fill="#52cdae" stroke="#9fe8d8"/></svg>
<div style="left:262px;top:660px;width:57px;height:27px;background:#000"></div>
<div class="bn" style="left:264px;top:662px;width:53px;height:23px;line-height:22px">First</div>
<div class="bn" style="left:320px;top:662px;width:43px;height:23px;line-height:22px;font-weight:normal">&lt;---</div>
<div class="bn" style="left:368px;top:662px;width:44px;height:23px;line-height:22px;font-weight:normal">---&gt;</div>
<div class="bn" style="left:416px;top:662px;width:44px;height:23px;line-height:22px">Last</div>
<span class="s sb" style="left:464px;top:666px">Index:</span>
<div class="sunk" style="left:523px;top:662px;width:58px;height:22px"></div>
<span class="s" style="left:529px;top:664px">26720</span>
<svg style="left:525px;top:664px" width="6" height="18"><path d="M1 1h4M3 1v15M1 16h4" stroke="#222" fill="none"/></svg>
<div class="ln" style="left:262px;top:719px;width:124px;height:1px"></div>
<div style="left:386px;top:688px;width:29px;height:32px;background:#9fdada"></div>
<div class="bn" style="left:268px;top:690px;width:116px;height:28px;text-align:left;padding-left:4px;line-height:28px">Auto Zoom</div>
<div style="left:363px;top:702px;width:13px;height:6px;background:#9fdada;border:1px solid;border-color:#e8fafa #4d8a8a #4d8a8a #e8fafa"></div>
<div class="ln" style="left:385px;top:688px;width:1px;height:31px"></div>
<span class="s sb" style="left:386px;top:697px">Sv:</span>
<div style="left:413px;top:687px;width:69px;height:33px;background:#f02020;border:1px solid #a01010"></div>
<div style="left:419px;top:690px;width:61px;height:28px;background:#f02020;border:2px solid;border-color:#ffb0b0 #a01010 #a01010 #ffb0b0"></div>
<span class="s sb" style="left:429px;top:697px;color:#900">!!</span>
<div style="left:460px;top:702px;width:13px;height:6px;background:#f8a0a0;border:1px solid;border-color:#ffe0e0 #900 #900 #ffe0e0"></div>
<div class="sunk" style="left:486px;top:694px;width:13px;height:13px;border-width:1px"></div>
<span class="s sb" style="left:502px;top:694px;font-size:14px;letter-spacing:.6px">Show All</span>
<div class="ib" style="left:494px;top:723px"><em>DEL</em><s style="background:#e01010"></s></div>
<div class="ib" style="left:528px;top:723px"><em>REF</em><s style="background:#10d010"></s></div>
<div class="ib" style="left:562px;top:723px;width:33px"><em style="width:25px;font-size:9px">UNDO</em><svg style="left:10px;top:13px" width="11" height="11"><path d="M2 5h5a2.500 2.500 0 0 1 0 5H4M2 5l3-3M2 5l3 3" fill="none" stroke="#e8e000" stroke-width="1.600"/></svg></div>

<div class="ln" style="left:90px;top:754px;width:509px;height:2px"></div>
<div style="left:90px;top:756px;width:509px;height:19px;background:#52cdae"></div>
<span class="s sb" style="left:168px;top:758px;font-weight:normal;-webkit-text-stroke:.3px #000">ss 5.594mil  r29.528  rect53.3x231.3xr1</span>
<div class="ln" style="left:90px;top:775px;width:509px;height:2px"></div>
<div style="left:90px;top:777px;width:508px;height:19px;background:#ffffd6"></div>
<span class="s sb" style="left:92px;top:780px">ERF--&gt; npth2p = 11 12 14</span>
<div style="left:90px;top:796px;width:509px;height:35px;background:#9fdada"></div>
<div class="bn" style="left:92px;top:800px;width:301px;height:28px;line-height:28px">Close</div>
<div class="b" style="left:398px;top:799px;width:29px;height:29px"><svg style="left:3px;top:3px" width="21" height="21"><rect x="1" y="1" width="10" height="18" fill="#222"/><rect x="10" y="1" width="9" height="13" fill="#ffff20" stroke="#000"/><rect x="1" y="14" width="18" height="5" fill="#000"/><circle cx="6" cy="6" r="1" fill="#fff"/><circle cx="6" cy="10" r="1" fill="#fff"/></svg></div>
<div class="b" style="left:432px;top:799px;width:29px;height:29px"><svg style="left:3px;top:3px" width="21" height="21"><rect x="1" y="1" width="19" height="19" fill="#111"/><rect x="3" y="3" width="15" height="12" fill="#d01818"/><circle cx="8" cy="10" r="3" fill="#111"/><path d="M11 10h5V4" stroke="#fff" fill="none"/><rect x="3" y="16" width="15" height="2" fill="#fff"/></svg></div>
<div class="b" style="left:466px;top:799px;width:29px;height:29px"><svg style="left:3px;top:3px" width="21" height="21"><text x="1" y="14" font-family="Liberation Mono" font-size="9" fill="#111">REF</text><path d="M2 3l17 15M19 3L2 18" stroke="#d01818" stroke-width="1.500"/></svg></div>
<div class="b" style="left:499px;top:799px;width:29px;height:29px"><svg style="left:3px;top:3px" width="21" height="21"><path d="M4 1h13v15l-3 3H4z" fill="#20f020" stroke="#000"/><text x="5.500" y="13" font-family="Liberation Sans" font-weight="bold" font-size="9">12</text></svg></div>
<div class="b" style="left:533px;top:799px;width:29px;height:29px"><svg style="left:3px;top:3px" width="21" height="21"><path d="M4 1h13v15l-3 3H4z" fill="#ffff20" stroke="#000"/><path d="M6 5h9M6 8h9M6 11h9M6 14h6" stroke="#000"/></svg></div>
<div class="b" style="left:567px;top:799px;width:30px;height:29px"><svg style="left:3px;top:3px" width="21" height="21"><rect x="2" y="10" width="4" height="9" fill="#d01818"/><rect x="7" y="6" width="4" height="13" fill="#20c020"/><rect x="12" y="2" width="4" height="17" fill="#c020c0"/><rect x="17" y="9" width="3" height="10" fill="#20a0e0"/><path d="M0 19.500h21" stroke="#000"/></svg></div>

<!-- notification -->
<div style="left:1067px;top:756px;width:329px;height:74px;background:rgba(214,222,216,.86);border:1px solid #1a3a6a"></div>
<div style="left:1068px;top:757px;width:327px;height:7px;background:linear-gradient(#b0b0b0,#808a8a)"></div>
<svg style="left:1213px;top:758px" width="36" height="4"><path d="M0 1.500h36" stroke="#fff" stroke-width="2" stroke-dasharray="2 1.500"/></svg>
<svg style="left:1074px;top:769px" width="30" height="30"><path d="M2 10L15 1l13 9v17H2z" fill="#f0e0a0" stroke="#8aa0c0"/><rect x="2" y="11" width="26" height="16" fill="#dceef8" stroke="#8aa0c0"/><path d="M2 11l13 9 13-9" fill="#f2d890" stroke="#8aa0c0"/><path d="M2 27l10-9M28 27l-10-9" stroke="#8aa0c0" fill="none"/></svg>
<svg style="left:1075px;top:805px" width="32" height="16"><path d="M4 3l9 2-5 4-2 5z" fill="#a05030"/><path d="M20 2l11 12M31 2L20 14" stroke="#445" stroke-width="2"/></svg>
<span class="s" style="left:1114px;top:769px;font:12px/14px 'Liberation Mono','Noto Sans CJK SC',monospace;color:#111;letter-spacing:-.95px;-webkit-text-stroke:0">filecontroler[广州文控]</span>
<span class="s" style="left:1114px;top:781px;font:12px/14px 'Liberation Mono','Noto Sans CJK SC',monospace;color:#111;letter-spacing:-.95px;-webkit-text-stroke:0">答复: 6A757022A0更改</span>
<span class="s" style="left:1114px;top:793px;font:12px/14px 'Noto Sans CJK SC',sans-serif;color:#1a1ad0;-webkit-text-stroke:0">已替换</span>
<span class="s" style="left:1114px;top:804px;font:12px/14px 'Liberation Mono',monospace;color:#1a1ad0;letter-spacing:-2.200px;-webkit-text-stroke:0">-------------------------</span>
<svg style="left:1362px;top:770px" width="30" height="10"><path d="M1 1h9l-4.500 5z" fill="#111"/><path d="M21 2l6 6M27 2l-6 6" stroke="#333" stroke-width="1.500"/></svg>

<!-- taskbar -->
<div style="left:0;top:873px;width:1440px;height:27px;background:#d4d0c8;border-top:1px solid #fff"></div>
<div class="t" style="left:3px;width:49px;padding-left:21px;font-size:12px"><svg width="16" height="16"><rect x="2" y="3" width="5" height="5" fill="#e83030"/><rect x="8" y="2" width="6" height="6" fill="#30b030"/><rect x="2" y="9" width="5" height="5" fill="#3060e0"/><rect x="8" y="9" width="6" height="6" fill="#e8c020"/></svg>开始</div>
<svg style="left:56px;top:877px" width="105" height="20"><path d="M2.500 1v17" stroke="#808080"/><path d="M4.500 1v17" stroke="#fff"/><rect x="14" y="2" width="15" height="15" fill="#f8e0a0" stroke="#d08030"/><circle cx="21.500" cy="9.500" r="5" fill="none" stroke="#d08030"/><path d="M21.500 6v4h3" stroke="#d08030" fill="none"/><rect x="38" y="4" width="13" height="13" fill="#fff" stroke="#333"/><path d="M42 14l9-11" stroke="#555" stroke-width="2"/><rect x="60" y="2" width="15" height="15" fill="#e8c8c8" stroke="#d44"/><circle cx="67.500" cy="9.500" r="6" fill="#16307a"/><path d="M101.500 1v17" stroke="#808080"/><path d="M103.500 1v17" stroke="#fff"/></svg>

<div class="t" style="left:166px"><svg width="16" height="16"><polygon points="8,1 10,6 15,6 11,9 13,15 8,11 3,15 5,9 1,6 6,6" fill="#f09020" stroke="#a04000"/></svg>兴...</div>
<div class="t" style="left:227px"><svg width="16" height="16"><rect x="1" y="1" width="14" height="14" fill="#181888"/><rect x="3" y="9" width="10" height="5" fill="#e02020"/><rect x="3" y="11" width="10" height="1" fill="#fff"/><rect x="4" y="1" width="8" height="5" fill="#fff"/></svg>Tota...</div>
<div class="t" style="left:288px"><svg width="16" height="16"><circle cx="8" cy="9" r="6.500" fill="#2080a0" stroke="#103050"/><circle cx="8" cy="9" r="3" fill="#40c040"/><path d="M1 3l5 2" stroke="#333" stroke-width="2"/></svg>Gen...</div>
<div class="t" style="left:349px"><svg width="16" height="16"><use href="#xw"/></svg>Engi...</div>
<div class="t" style="left:410px"><svg width="16" height="16"><use href="#xw"/></svg>Prog...</div>
<div class="t" style="left:471px"><svg width="16" height="16"><use href="#gl"/></svg>pcb...</div>
<div class="t" style="left:532px"><svg width="16" height="16"><rect x="3" y="2" width="10" height="12" fill="#b8d0f0"/><path d="M3 4h10M3 6.500h10M3 9h10M3 11.500h10" stroke="#3060c0"/></svg>制...</div>
<div class="t" style="left:593px"><svg width="16" height="16"><rect x="1" y="3" width="14" height="10" rx="1" fill="#3090b0" stroke="#103050"/><rect x="3" y="5" width="10" height="3" fill="#cff"/><path d="M3 10h10" stroke="#fff" stroke-dasharray="1 1"/></svg>计...</div>
<div class="t" style="left:654px"><svg width="16" height="16"><use href="#gl"/></svg>pcb...</div>
<div class="t" style="left:715px"><svg width="16" height="16"><rect x="3" y="1" width="10" height="14" fill="#fff" stroke="#222"/><path d="M5 5h6M5 7.500h6M5 10h6M5 12.500h6" stroke="#222"/></svg>8v1...</div>
<div class="t" style="left:776px;border-color:#404040 #fff #fff #404040;background:repeating-conic-gradient(#fff 0 25%,#d4d0c8 0 50%) 0 0/2px 2px"><svg width="16" height="16"><use href="#xw"/></svg>Gra...</div>
<div class="t" style="left:837px"><svg width="16" height="16"><rect x="4" y="1" width="11" height="14" fill="#fff" stroke="#446"/><rect x="1" y="3" width="9" height="9" fill="#3050c0" stroke="#135"/><text x="2" y="10.500" font-size="8" fill="#fff" font-family="Liberation Sans" font-weight="bold">W</text></svg>Tem...</div>
<div class="t" style="left:898px"><svg width="16" height="16"><ellipse cx="9" cy="9" rx="6.500" ry="4.500" fill="#40a040" stroke="#103050"/><circle cx="9" cy="9" r="2" fill="#115"/><path d="M1 3l5 3" stroke="#206060" stroke-width="2"/></svg>CAM...</div>
<div class="t" style="left:959px"><svg width="16" height="16"><use href="#xw"/></svg>8v1...</div>
<div class="t" style="left:1020px"><svg width="16" height="16"><use href="#xl"/></svg>8v1...</div>
<div class="t" style="left:1081px"><svg width="16" height="16"><use href="#xl"/></svg>外...</div>
<div class="t" style="left:1142px"><svg width="16" height="16"><rect x="1" y="4" width="14" height="9" fill="#f8e090" stroke="#a08030"/><path d="M1 4l7 5 7-5" fill="none" stroke="#a08030"/></svg>6A7...</div>
<div class="t" style="left:1203px"><svg width="16" height="16"><use href="#xl"/></svg>二...</div>

<div style="left:1273px;top:877px;width:164px;height:20px;background:#d4d0c8;border:1px solid;border-color:#808080 #fff #fff #808080"></div>
<svg style="left:1275px;top:878px" width="110" height="18"><path d="M2 9l8-7 6 6-8 8z" fill="#e8e020" stroke="#222"/><path d="M4 10l6-6M7 12l5-5" stroke="#222"/><polygon points="24,15 32,3 34,15" fill="#e02020"/><polygon points="32,3 40,15 34,15" fill="#30b030"/><path d="M44 3l13 12M57 3L44 15" stroke="#800080" stroke-width="2.500"/><circle cx="65" cy="10" r="5.500" fill="none" stroke="#800080" stroke-width="2"/><circle cx="65" cy="3" r="2" fill="#e8e020"/><circle cx="65" cy="10" r="2" fill="#e8e020"/><rect x="74" y="1" width="16" height="16" fill="#80804a"/><circle cx="82" cy="9" r="5" fill="none" stroke="#fff" stroke-width="1.500"/><rect x="94" y="5" width="13" height="9" fill="#f4e8c8" stroke="#333"/><path d="M94 5l6.500 5 6.500-5" fill="none" stroke="#333"/></svg>
<span class="s" style="left:1396px;top:880px;font:12px/16px 'Liberation Sans',sans-serif;-webkit-text-stroke:0">20:51</span>

</body></html>
